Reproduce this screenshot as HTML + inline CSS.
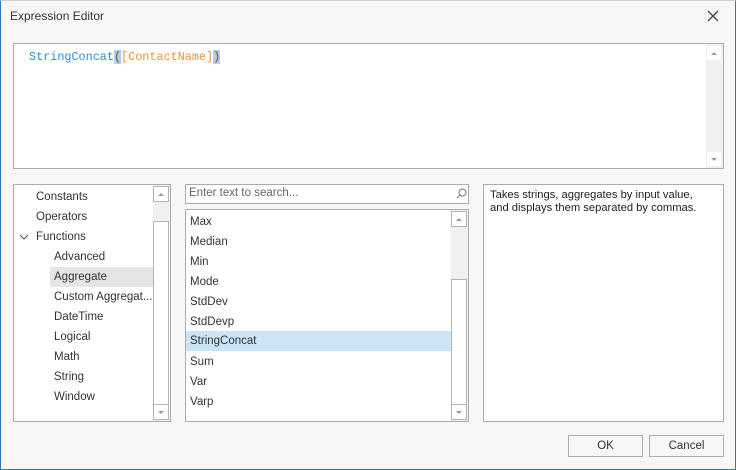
<!DOCTYPE html>
<html><head><style>
*{margin:0;padding:0;box-sizing:border-box}
body{width:736px;height:470px;background:#f7f7f7;font-family:"Liberation Sans",sans-serif;font-size:11.5px;color:#333;position:relative;overflow:hidden}
.win{position:absolute;left:0;top:0;width:736px;height:470px;border:1px solid #2a78c0;border-top-color:#d0d0d0}
.abs{position:absolute}
.box{position:absolute;background:#fff;border:1px solid #acacac}
.sb{position:absolute;background:#f0f0f0}
.btnup,.btndn{position:absolute;left:0;width:16px;height:16px;background:#fff;border:1px solid #b5b5b5}
.btnup:after,.btndn:after{content:"";position:absolute;left:4px;top:6px;border-left:3px solid transparent;border-right:3px solid transparent}
.btnup:after{border-bottom:3px solid #999}
.btndn:after{border-top:3px solid #999}
.thumb{position:absolute;left:0;width:16px;background:#fff;border:1px solid #b5b5b5}
.it{position:absolute;height:20px;line-height:20px;white-space:nowrap}
.bt{position:absolute;top:435px;height:22px;width:75px;background:#f7f7f7;border:1px solid #acacac;text-align:center;line-height:20px}
</style></head><body>
<div class="win"></div>
<div class="abs" style="left:10px;top:9px;font-size:12px">Expression Editor</div>
<svg class="abs" style="left:707px;top:10px" width="12" height="12"><path d="M1 1L11 11M11 1L1 11" stroke="#444" stroke-width="1.3"/></svg>

<div class="box" style="left:13px;top:43px;width:711px;height:126px">
 <div class="abs" style="left:15px;top:5px;font-family:'Liberation Mono',monospace;font-size:11.8px;color:#2b8fd0;line-height:16px">StringConcat<span style="background:#b6cbe8;color:#555">(</span><span style="color:#f0902c">[ContactName]</span><span style="background:#b6cbe8;color:#555">)</span></div>
 <div class="sb" style="left:692px;top:0;width:17px;height:124px"><div class="btnup" style="top:1px;border-color:#eee"></div><div class="btndn" style="top:107px;border-color:#eee"></div></div>
</div>

<div class="box" style="left:13px;top:184px;width:158px;height:238px">
 <div class="it" style="left:22px;top:2px">Constants</div>
 <div class="it" style="left:22px;top:22px">Operators</div>
 <svg class="abs" style="left:5px;top:49px" width="10" height="6"><path d="M1 1L5 5L9 1" stroke="#555" fill="none" stroke-width="1.1"/></svg>
 <div class="it" style="left:22px;top:42px">Functions</div>
 <div class="it" style="left:40px;top:62px">Advanced</div>
 <div class="it" style="left:36px;top:82px;width:104px;background:#e5e5e5;padding-left:4px">Aggregate</div>
 <div class="it" style="left:40px;top:102px">Custom Aggregat...</div>
 <div class="it" style="left:40px;top:122px">DateTime</div>
 <div class="it" style="left:40px;top:142px">Logical</div>
 <div class="it" style="left:40px;top:162px">Math</div>
 <div class="it" style="left:40px;top:182px">String</div>
 <div class="it" style="left:40px;top:202px">Window</div>
 <div class="sb" style="left:139px;top:0;width:17px;height:236px"><div class="btnup" style="top:1px"></div><div class="thumb" style="top:36px;height:186px"></div><div class="btndn" style="top:219px"></div></div>
</div>

<div class="box" style="left:185px;top:184px;width:284px;height:20px">
 <div class="abs" style="left:3px;top:2px;color:#666">Enter text to search...</div>
 <svg class="abs" style="left:270px;top:3px" width="11" height="11"><circle cx="6.5" cy="4.5" r="3.5" stroke="#777" fill="none"/><path d="M4 7L1 10" stroke="#777"/></svg>
</div>

<div class="box" style="left:185px;top:209px;width:284px;height:213px">
 <div class="it" style="left:4px;top:2px">Max</div>
 <div class="it" style="left:4px;top:22px">Median</div>
 <div class="it" style="left:4px;top:42px">Min</div>
 <div class="it" style="left:4px;top:62px">Mode</div>
 <div class="it" style="left:4px;top:82px">StdDev</div>
 <div class="it" style="left:4px;top:102px">StdDevp</div>
 <div class="it" style="left:0;top:121px;width:265px;background:#cce4f7;padding-left:4px;line-height:21px">StringConcat</div>
 <div class="it" style="left:4px;top:142px">Sum</div>
 <div class="it" style="left:4px;top:162px">Var</div>
 <div class="it" style="left:4px;top:182px">Varp</div>
 <div class="sb" style="left:265px;top:0;width:17px;height:211px"><div class="btnup" style="top:1px"></div><div class="thumb" style="top:69px;height:127px"></div><div class="btndn" style="top:194px"></div></div>
</div>

<div class="box" style="left:483px;top:184px;width:241px;height:238px">
 <div class="abs" style="left:6px;top:4px;line-height:13px;color:#222;font-size:11.2px">Takes strings, aggregates by input value,<br>and displays them separated by commas.</div>
</div>

<div class="bt" style="left:568px">OK</div>
<div class="bt" style="left:649px">Cancel</div>
</body></html>
